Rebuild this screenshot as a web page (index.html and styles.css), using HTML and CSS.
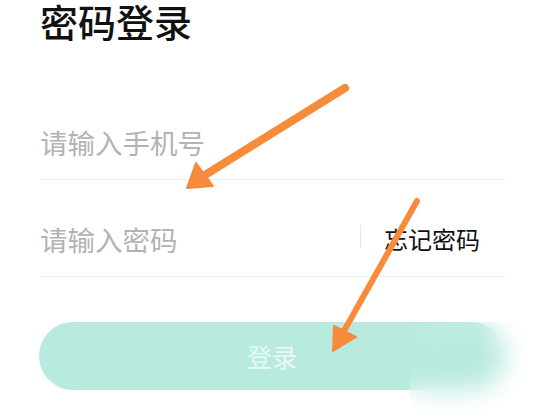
FILE: index.html
```html
<!DOCTYPE html>
<html lang="zh">
<head>
<meta charset="utf-8">
<link rel="stylesheet" href="styles.css">
</head>
<body>
<div class="page">
  <h1 class="title">密码登录</h1>
  <div class="field">
    <span class="placeholder">请输入手机号</span>
  </div>
  <div class="field">
    <span class="placeholder">请输入密码</span>
    <span class="sep"></span>
    <span class="forgot">忘记密码</span>
  </div>
  <button class="login">登录</button>
</div>
<div class="blur"></div>
<svg class="arrows" width="534" height="418" viewBox="0 0 534 418">
  <g stroke="#f68b3b" stroke-linecap="round" fill="#f68b3b">
    <line x1="345" y1="88" x2="197" y2="180" stroke-width="8"/>
    <polygon points="187,188 196,163 213,186" stroke-width="2" stroke-linejoin="round"/>
    <line x1="417" y1="201" x2="340" y2="338" stroke-width="6"/>
    <polygon points="333,351 334,326 356,337" stroke-width="2" stroke-linejoin="round"/>
  </g>
</svg>
</body>
</html>
```
FILE: styles.css
```css
html, body {
  margin: 0;
  padding: 0;
  background: #fff;
}
body {
  width: 534px;
  height: 418px;
  overflow: hidden;
  position: relative;
  font-family: "Noto Sans CJK SC", "Noto Sans", sans-serif;
}
.page {
  padding: 2px 29px 0 40px;
  display: flex;
  flex-direction: column;
}
.title {
  margin: 0;
  font-size: 38px;
  line-height: 38px;
  font-weight: 500;
  color: #111;
}
.title + .field {
  margin-top: 43px;
}
.field {
  height: 96px;
  border-bottom: 1px solid #eeeeee;
  display: flex;
  align-items: flex-start;
}
.placeholder {
  margin-top: 45px;
  font-size: 27.5px;
  line-height: 28px;
  color: #b3b3b3;
  flex: 1;
  white-space: nowrap;
}
.sep {
  margin-top: 45px;
  width: 1px;
  height: 23px;
  background: #e6e6e6;
  margin-right: 23px;
}
.forgot {
  margin-top: 45px;
  font-size: 24px;
  line-height: 28px;
  color: #111;
  white-space: nowrap;
  margin-right: 25px;
}
.login {
  margin-top: 45px;
  height: 68px;
  width: 466px;
  margin-left: -1px;
  border: none;
  border-radius: 34px;
  background: #b9eadf;
  color: #eaf9f5;
  font-family: "Noto Sans CJK SC", "Noto Sans", sans-serif;
  font-size: 25px;
  padding: 0;
}
.blur {
  position: absolute;
  left: 410px;
  top: 322px;
  width: 124px;
  height: 96px;
  backdrop-filter: blur(12px);
  -webkit-backdrop-filter: blur(12px);
}
.arrows {
  position: absolute;
  left: 0;
  top: 0;
}
```
